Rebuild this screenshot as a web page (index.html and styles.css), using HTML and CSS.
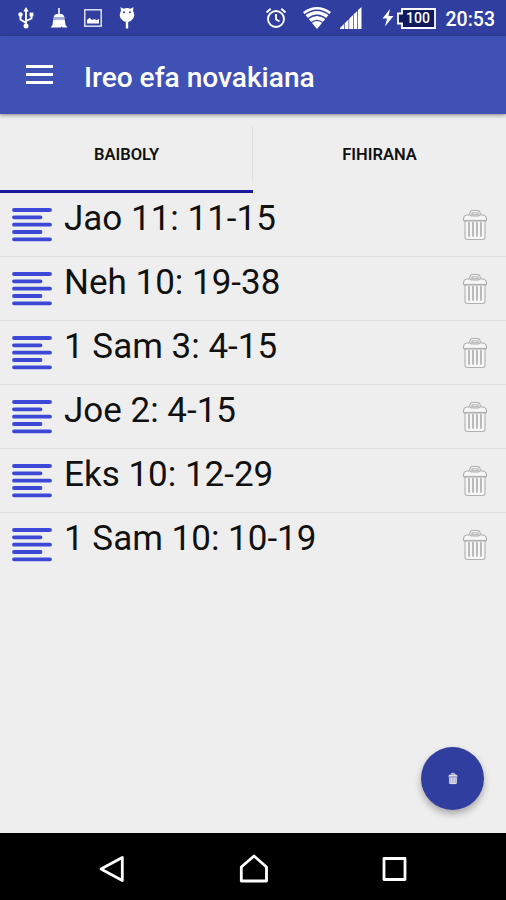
FILE: index.html
```html
<!DOCTYPE html>
<html lang="mg">

<head>
    <meta charset="UTF-8">
    <meta name="viewport" content="width=device-width, initial-scale=1.0">
    <title>Ireo efa novakiana</title>
    <link rel="stylesheet" href="styles.css">
</head>

<body>
    <!-- shared icons -->
    <svg class="sprite">
        <symbol id="lines" viewBox="0 0 40 36">
            <path d="M2 3H38M2 10.3H28.5M2 17.7H38M2 25H28.5M2 32.3H38" fill="none" stroke="#3d48d6" stroke-width="3.8" stroke-linecap="round"/>
        </symbol>
        <symbol id="trash" viewBox="0 0 26 32">
            <g fill="#f6f6f6" stroke="currentColor" stroke-width="1.1" stroke-linejoin="round">
                <path d="M7 6L8.500 2.500Q9 1.500 10.500 1.500H15.500Q17 1.500 17.500 2.500L19 6"/>
                <path d="M3 11V28Q3 30.500 5.500 30.500H20.500Q23 30.500 23 28V11Z"/>
                <path d="M1.500 11.500V9Q2 6.500 5 6H8.500L9.500 7H16.500L17.500 6H21Q24 6.500 24.500 9V11.500Z"/>
                <path d="M10 3.800H16V5.800H10Z"/>
                <path d="M2 11.700H24" stroke-width="1.600"/>
                <path d="M7 13.500V27M11 13.500V27M15 13.500V27M19 13.500V27" stroke-width="1.700" stroke-linecap="round"/>
            </g>
        </symbol>
    </svg>

    <div class="status-bar">
        <div class="status-left">
            <svg width="16" height="22" viewBox="0 0 16 22">
                <path d="M8 19V3M8 16L2.500 12.500V8M8 14L13.500 11.500V8" fill="none" stroke="#fff" stroke-width="1.900"/>
                <path d="M8 0L10.700 4.500H5.300Z" fill="#fff"/>
                <circle cx="8" cy="19" r="2.500" fill="#fff"/>
                <circle cx="2.500" cy="7.500" r="2.200" fill="#fff"/>
                <rect x="11.600" y="5.600" width="3.800" height="3.800" fill="#fff"/>
            </svg>
            <svg width="18" height="22" viewBox="0 0 18 22">
                <path d="M8.200 1H9.800V7H12Q14 7.500 14.600 10.500H3.400Q4 7.500 6 7H8.200Z" fill="#fff"/>
                <path d="M3.200 10.500H14.800V13H3.200Z" fill="#a9b0dc"/>
                <path d="M3.200 13H14.800L15.500 18L17.500 20.500H12.500L11.500 19.500L10.500 20.500H.5L2.500 18Z" fill="#fff"/>
            </svg>
            <svg width="18" height="18" viewBox="0 0 18 18">
                <rect x=".8" y=".8" width="16.400" height="16.400" fill="none" stroke="#dfe2f5" stroke-width="1.500"/>
                <path d="M3 14.500V11L5.500 8.700L8 11L10 9.900L12.500 11L15 10V14.500Z" fill="#fff"/>
            </svg>
            <svg width="16" height="22" viewBox="0 0 16 22">
                <path d="M1.500 0L4.500 1.700Q8 .5 11.500 1.700L14.500 0L14 4Q16.500 8 14.200 11.500Q12 14.500 9.200 15V21.500H6.800V15Q4 14.500 1.800 11.500Q-.5 8 2 4Z" fill="#fff"/>
                <circle cx="5" cy="5.200" r="1" fill="#303f9f"/>
                <circle cx="11" cy="5.200" r="1" fill="#303f9f"/>
            </svg>
        </div>
        <div class="status-right">
            <svg class="alarm" width="22" height="22" viewBox="0 0 22 22" fill="none" stroke="#fff" stroke-width="1.900">
                <circle cx="11" cy="12" r="8"/>
                <path d="M11 7V12.300L14.500 14.500M1.500 5.500L5.700 1.700M20.500 5.500L16.300 1.700"/>
            </svg>
            <svg class="wifi" width="28" height="22" viewBox="0 0 28 22">
                <path d="M14 22L0 5Q14-5 28 5Z" fill="#fff"/>
                <path d="M1.500 8Q14-1.500 26.500 8M4.500 12Q14 4.500 23.500 12M8 15.800Q14 11 20 15.800" fill="none" stroke="#303f9f" stroke-width="1.300"/>
            </svg>
            <svg class="signal" width="22" height="22" viewBox="0 0 22 22">
                <path d="M0 22V21L4 17V22ZM4.700 22V16.300L8.500 12.500V22ZM9.200 22V11.800L13 8V22ZM13.700 22V7.300L17.300 4V22ZM18 22V3L21.500 0V22Z" fill="#fff"/>
            </svg>
            <svg class="bolt" width="12" height="18" viewBox="0 0 12 18">
                <path d="M8 0L.5 9.500H5L3 17.500L11.500 7H6.500Z" fill="#fff"/>
            </svg>
            <div class="battery">
                <svg width="39" height="21" viewBox="0 0 39 21">
                    <path d="M5 1H38V20H5V15.500H1V5.500H5Z" fill="#111a5c" stroke="#fff" stroke-width="1.800"/>
                </svg>
                <span>100</span>
            </div>
            <div class="clock">20:53</div>
        </div>
    </div>

    <header class="app-bar">
        <div class="menu"><span></span><span></span><span></span></div>
        <h1>Ireo efa novakiana</h1>
    </header>

    <nav class="tabs">
        <div class="tab active">BAIBOLY</div>
        <div class="tab">FIHIRANA</div>
    </nav>

    <main>
        <ul class="list">
            <li>
                <svg class="lines"><use href="#lines"/></svg>
                <span>Jao 11: 11-15</span>
                <svg class="trash"><use href="#trash"/></svg>
            </li>
            <li>
                <svg class="lines"><use href="#lines"/></svg>
                <span>Neh 10: 19-38</span>
                <svg class="trash"><use href="#trash"/></svg>
            </li>
            <li>
                <svg class="lines"><use href="#lines"/></svg>
                <span>1 Sam 3: 4-15</span>
                <svg class="trash"><use href="#trash"/></svg>
            </li>
            <li>
                <svg class="lines"><use href="#lines"/></svg>
                <span>Joe 2: 4-15</span>
                <svg class="trash"><use href="#trash"/></svg>
            </li>
            <li>
                <svg class="lines"><use href="#lines"/></svg>
                <span>Eks 10: 12-29</span>
                <svg class="trash"><use href="#trash"/></svg>
            </li>
            <li>
                <svg class="lines"><use href="#lines"/></svg>
                <span>1 Sam 10: 10-19</span>
                <svg class="trash"><use href="#trash"/></svg>
            </li>
        </ul>
        <div class="fab">
            <svg width="10" height="13"><use href="#trash"/></svg>
        </div>
    </main>

    <footer class="nav-bar">
        <svg width="30" height="30" viewBox="0 0 30 30">
            <path d="M25.300 4.500V27.500L4 16Z"/>
        </svg>
        <svg width="30" height="30" viewBox="0 0 30 30">
            <path d="M3.300 28V14L16 3L28.500 14V28Z"/>
        </svg>
        <svg width="30" height="30" viewBox="0 0 30 30">
            <rect x="5" y="5.500" width="21" height="21"/>
        </svg>
    </footer>
</body>

</html>
```
FILE: styles.css
```css
body {
    margin: 0;
    height: 900px;
    display: flex;
    flex-direction: column;
    overflow: hidden;
    background: #eeeeee;
    font-family: Roboto, sans-serif;
}

svg {
    display: block;
    flex-shrink: 0;
}

.sprite {
    position: absolute;
    width: 0;
    height: 0;
}

/* status bar */
.status-bar {
    display: flex;
    justify-content: space-between;
    height: 36px;
    box-sizing: border-box;
    padding: 0 11px 0 18px;
    background: #303f9f;
    color: #fff;
}

.status-left,
.status-right {
    display: flex;
    align-items: center;
}

.status-left {
    gap: 16px;
}

.status-left svg:last-child {
    margin-left: 1px;
}

.alarm {
    margin-right: 16px;
}

.wifi {
    margin-right: 9px;
}

.signal {
    margin-right: 20px;
}

.bolt {
    margin-right: 3px;
}

.battery {
    position: relative;
    margin-right: 10px;
}

.battery span {
    position: absolute;
    inset: 0 0 0 4px;
    font-size: 14px;
    font-weight: 500;
    line-height: 21px;
    text-align: center;
}

.clock {
    margin-top: 2px;
    font-size: 19.5px;
    font-weight: 500;
}

/* app bar */
.app-bar {
    position: relative;
    display: flex;
    align-items: center;
    height: 78px;
    padding: 0 26px;
    background: #3f51b5;
    box-shadow: 0 1px 4px rgba(0, 0, 0, 0.45);
}

.menu {
    display: flex;
    flex-direction: column;
    gap: 5px;
    width: 27px;
    margin-right: 31px;
    margin-top: -2px;
}

.menu span {
    height: 3px;
    background: #fff;
}

.app-bar h1 {
    margin: 4px 0 0;
    color: #fff;
    font-size: 28.1px;
    font-weight: 500;
    white-space: nowrap;
}

/* tabs */
.tabs {
    display: flex;
    height: 79px;
}

.tab {
    flex: 1;
    box-sizing: border-box;
    height: 79px;
    border-bottom: 3px solid transparent;
    color: #111;
    font-size: 16.5px;
    font-weight: 600;
    line-height: 81px;
    text-align: center;
}

.tab.active {
    border-bottom-color: #1a1a9c;
    background: linear-gradient(#e0e0e0, #e0e0e0) right 12px / 1px 56px no-repeat;
}

/* list */
main {
    position: relative;
    flex: 1;
}

.list {
    margin: 0;
    padding: 0;
    list-style: none;
}

.list li {
    display: flex;
    height: 64px;
    box-sizing: border-box;
    padding: 0 18px 0 12px;
    border-bottom: 1px solid #dcdcdc;
}

.list li:last-child {
    border-bottom: none;
}

.list span {
    flex: 1;
    margin-left: 12px;
    color: #111;
    font-size: 35px;
    line-height: 52px;
}

.lines {
    width: 40px;
    height: 36px;
    margin-top: 14px;
}

.trash {
    width: 26px;
    height: 32px;
    margin-top: 16px;
    color: #afafaf;
}

.fab {
    position: absolute;
    right: 22px;
    bottom: 23px;
    display: flex;
    align-items: center;
    justify-content: center;
    width: 63px;
    height: 63px;
    border-radius: 50%;
    background: #303f9f;
    box-shadow: 0 4px 7px rgba(0, 0, 0, 0.3);
    color: #7a82bb;
}

/* system buttons */
.nav-bar {
    display: flex;
    justify-content: center;
    gap: 111px;
    height: 67px;
    box-sizing: border-box;
    padding-top: 20px;
    background: #000;
}

.nav-bar svg {
    fill: none;
    stroke: #fff;
    stroke-width: 2.8;
    stroke-linejoin: round;
}
```
